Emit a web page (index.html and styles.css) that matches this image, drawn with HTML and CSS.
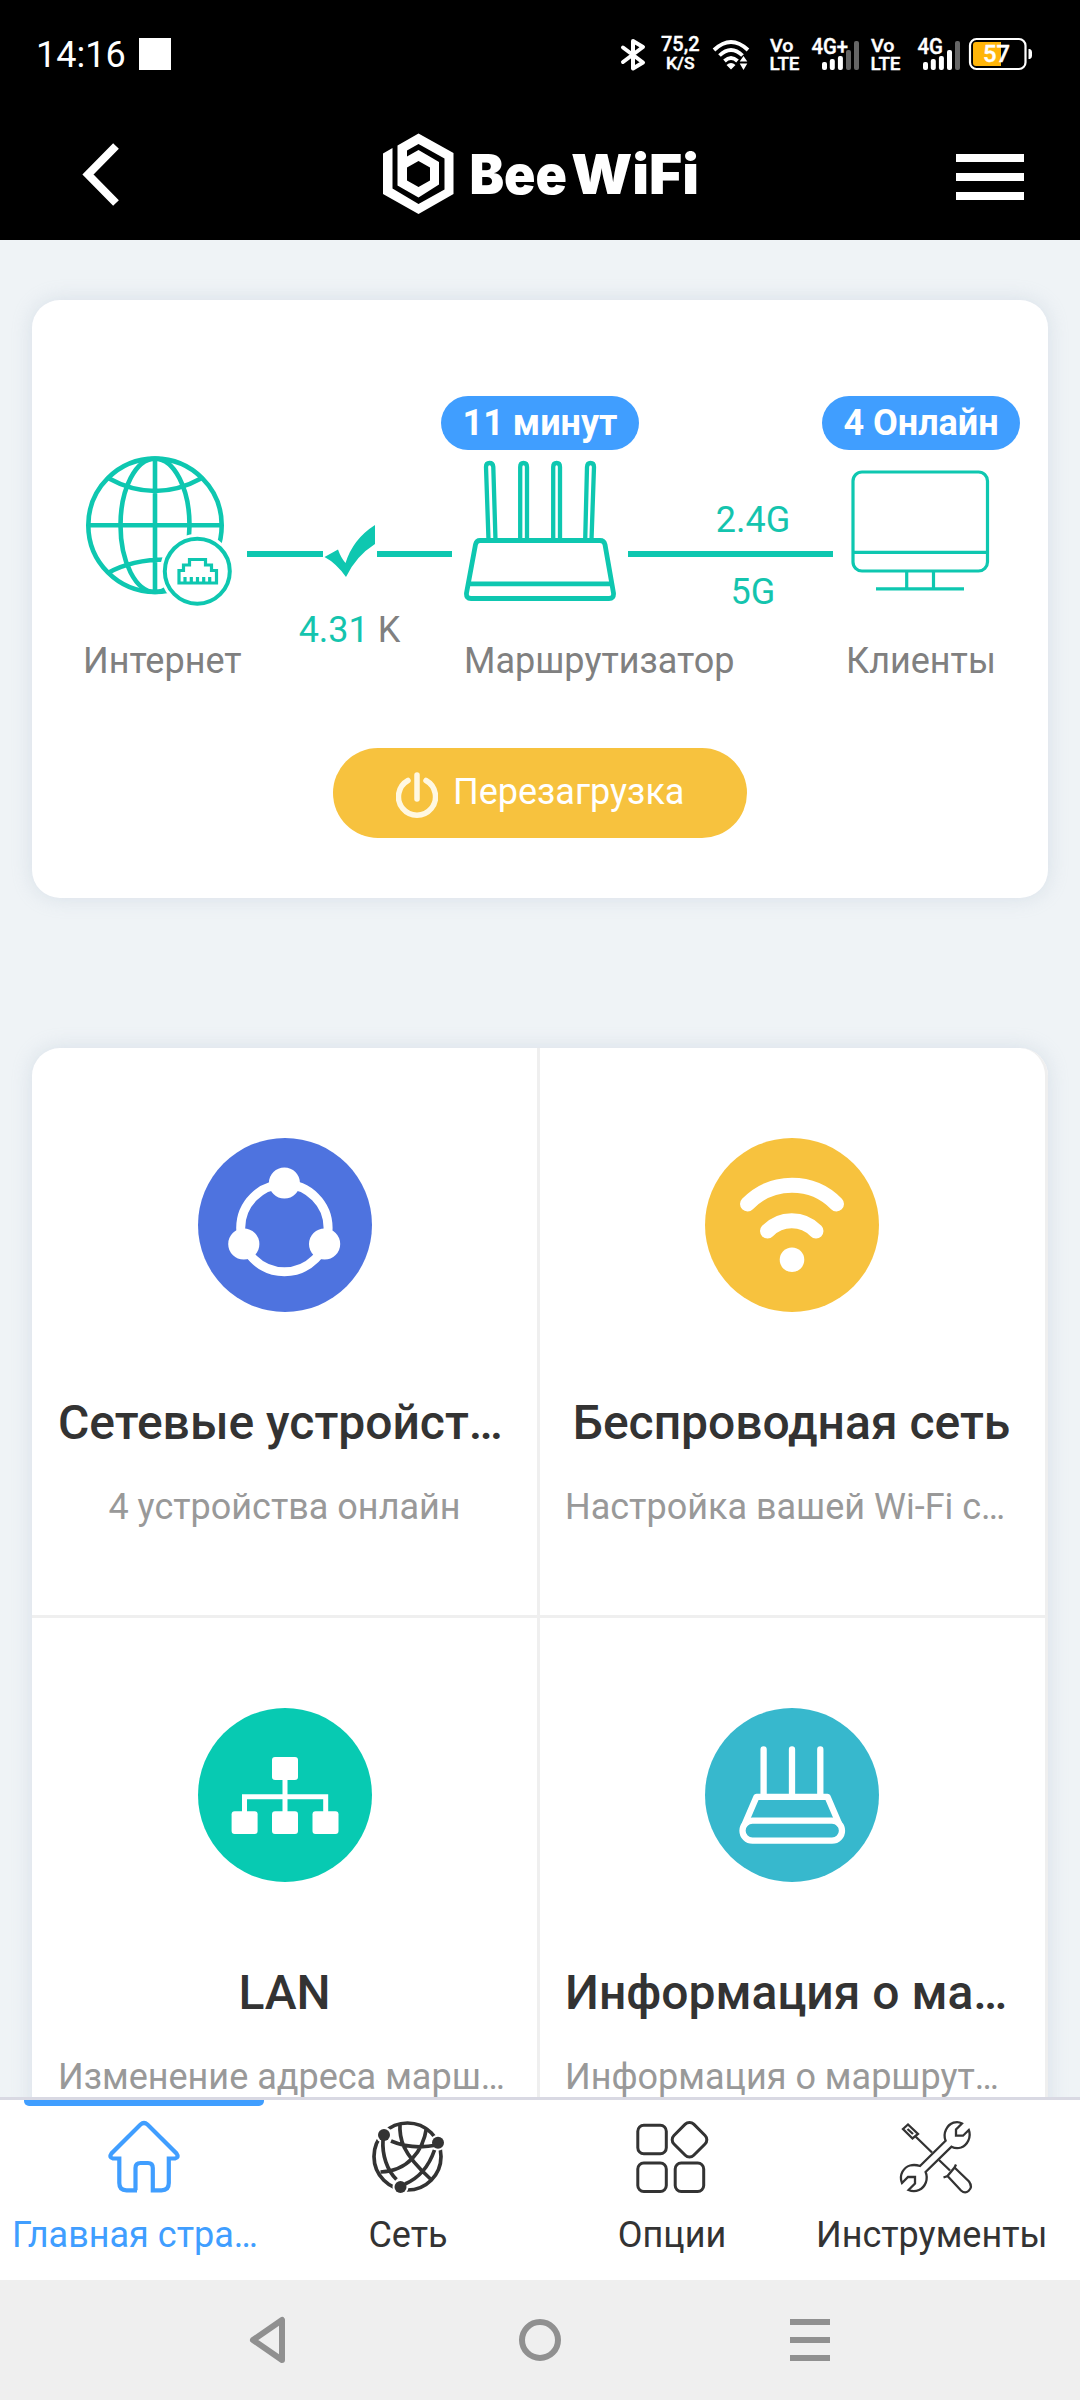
FILE: index.html
```html
<!DOCTYPE html>
<html lang="ru">
<head>
<meta charset="utf-8">
<title>BeeWiFi</title>
<link rel="stylesheet" href="styles.css">
</head>
<body>
<div class="screen">
  <div class="statusbar">
    <div class="clock"><span>14:16</span><i class="notice"></i></div>
    <div class="indicators">
      <svg width="40" height="48" viewBox="615 30 40 48"><path class="bt" d="M623 47.500L643 62.500L633 68.500V41L643 47L623 62"/></svg>
      <svg width="50" height="48" viewBox="655 30 50 48" class="tiny"><text x="661" y="51" font-size="21" textLength="38.500" lengthAdjust="spacingAndGlyphs">75,2</text><text x="666" y="69" font-size="16.500" textLength="28.500" lengthAdjust="spacingAndGlyphs">K/S</text></svg>
      <svg width="52" height="48" viewBox="705 30 52 48"><g class="arcs"><path d="M714 50Q731 34 748 50"/><path d="M719.500 55.500Q731 44.500 742.500 55.500"/><path d="M724.500 61Q731 55 737.500 61"/></g><path class="solid" d="M726.500 65Q731 61 735.500 65L731 69.500ZM743.500 56l3.800 5.500h-7.600zM743.500 70l3.800-6.500h-7.600z"/></svg>
      <svg width="108" height="48" viewBox="757 30 108 48" class="tiny"><text x="770" y="51.500" font-size="18.500" textLength="23.500" lengthAdjust="spacingAndGlyphs">Vo</text><text x="769.500" y="70" font-size="19" textLength="30" lengthAdjust="spacingAndGlyphs">LTE</text><text x="811.500" y="53.500" font-size="21.500" textLength="36.500" lengthAdjust="spacingAndGlyphs">4G+</text>
        <g><rect x="822" y="62" width="5" height="8" rx="2"/><rect x="829.800" y="59" width="5" height="11" rx="2"/><rect x="837.900" y="56" width="5" height="14" rx="2"/><rect class="off" x="846" y="50" width="5" height="20" rx="2"/><rect class="off" x="854" y="41" width="5" height="29" rx="2"/></g></svg>
      <svg width="97" height="48" viewBox="865 30 97 48" class="tiny"><text x="871" y="51.500" font-size="18.500" textLength="23.500" lengthAdjust="spacingAndGlyphs">Vo</text><text x="870.500" y="70" font-size="19" textLength="30" lengthAdjust="spacingAndGlyphs">LTE</text><text x="917.500" y="53.500" font-size="21.500" textLength="25.500" lengthAdjust="spacingAndGlyphs">4G</text>
        <g><rect x="923" y="62" width="5" height="8" rx="2"/><rect x="930.800" y="59" width="5" height="11" rx="2"/><rect x="938.900" y="56" width="5" height="14" rx="2"/><rect x="947" y="50" width="5" height="20" rx="2"/><rect class="off" x="955" y="41" width="5" height="29" rx="2"/></g></svg>
      <svg width="78" height="48" viewBox="962 30 78 48" class="tiny"><rect class="shell" x="970" y="39" width="55.500" height="30" rx="6.500"/><path class="charge" d="M976 42h25v24h-25q-3 0-3-3v-18q0-3 3-3z"/><path d="M1028.500 49h1.500q2 1 2 3v4q0 2-2 3h-1.500z"/><text x="983" y="62" font-size="23.500" textLength="27" lengthAdjust="spacingAndGlyphs">57</text></svg>
    </div>
  </div>

  <header class="appbar">
    <svg class="back" width="56" height="80" viewBox="72 134 56 80"><path d="M116 146L88 174.500L116 203"/></svg>
    <div class="brand">
      <svg width="71" height="82" viewBox="383 133 71 82"><path fill-rule="evenodd" d="M383 153.500L392.500 148V188.500L418.500 204L444.500 189.500V158.500L418.500 144L407 150.500V156.500L418.500 150L439 162V184.500L418.500 197.500L397.500 185.500V145.500L418.500 133.500L453.500 153V194L418.500 214L383 194ZM418.500 161L407 167.500V180.500L418.500 187L430 180.500V167.500Z"/></svg>
      <svg width="240" height="82" viewBox="464 133 240 82" class="wordmark"><text x="469.500" y="194" textLength="97.500" lengthAdjust="spacingAndGlyphs">Bee</text><text x="571" y="194" textLength="128" lengthAdjust="spacingAndGlyphs">WiFi</text></svg>
    </div>
    <div class="menu"><i></i><i></i><i></i></div>
  </header>

  <main class="content">
    <section class="card topology">
      <div class="chain">
        <div class="node internet">
          <svg class="line" width="165" height="185" viewBox="82 455 165 185">
            <g stroke-width="4.600"><circle cx="155" cy="525.300" r="66.700"/><ellipse cx="155" cy="525.300" rx="34.500" ry="66.700"/><path d="M155 459V592M88 525.300H222M108 478Q155 504 202 478M108 573Q132 559 170 559.500"/></g>
            <circle class="halo" cx="197.300" cy="571.200" r="37.500"/><circle cx="197.300" cy="571.200" r="32.500" stroke-width="4"/>
            <path stroke-width="3.200" d="M179 583V570.500H183.500V565H189.500V559.500H205.500V565H211.500V570.500H216.500V583ZM185 583V577M191.300 583V577M197.500 583V577M203.700 583V577M209.700 583V577"/>
          </svg>
          <span class="label">Интернет</span>
        </div>
        <div class="link uplink">
          <svg width="205" height="154" viewBox="247 455 205 154"><path d="M247 551H323V557H247ZM377 551H452V557H377ZM324.500 557L338 549.500Q341 558 345.500 563Q353 539 375 525V544Q356 556 346 577Q336 563 324.500 557Z"/></svg>
          <span class="rate"><b>4.31</b> K</span>
        </div>
        <div class="node router">
          <span class="badge">11 минут</span>
          <svg class="line" width="166" height="185" viewBox="462 455 166 185">
            <g stroke-width="4.300"><path d="M488.500 540L486 467Q486 463 489.500 463Q493 463 493.300 467L495.500 540M520.200 540V467Q520.200 463 523.500 463Q527 463 527 467V540M553.200 540V467Q553.200 463 556.700 463Q560 463 560 467V540M585.200 540L587 467Q587.200 463 590.500 463Q594 463 594 467L591.500 540"/></g>
            <path stroke-width="4.800" d="M480 540.500H600Q604 540.500 605 544.500L613.500 593Q614 598.500 609 598.500H471Q466 598.500 466.500 593L475.500 544.500Q476.500 540.500 480 540.500ZM468 583.800H612"/>
          </svg>
          <span class="label">Маршрутизатор</span>
        </div>
        <div class="link downlink">
          <span>2.4G</span><i></i><span>5G</span>
        </div>
        <div class="node clients">
          <span class="badge">4 Онлайн</span>
          <svg class="line" width="165" height="185" viewBox="844 455 165 185"><g stroke-width="3.200"><rect x="853" y="472" width="134.500" height="99" rx="9"/><path d="M853 552.300H987M906.700 571V588M933.500 571V588M876 588.800H964"/></g></svg>
          <span class="label">Клиенты</span>
        </div>
      </div>
      <div class="reboot">
        <svg width="42" height="46" viewBox="396 772 42 46"><path d="M408 780.500A18.500 18.500 0 1 0 426 780.500M417 775V799"/></svg>
        <span>Перезагрузка</span>
      </div>
    </section>

    <section class="card tiles">
      <div class="tile">
        <svg width="174" height="174" viewBox="0 0 174 174"><circle cx="87" cy="87" r="87" fill="#4e73df"/><circle cx="86.400" cy="90" r="43.700" fill="none" stroke="#fff" stroke-width="9"/><g fill="#fff"><circle cx="86.400" cy="45" r="15.500"/><circle cx="45.800" cy="106" r="15.600"/><circle cx="126.600" cy="106" r="15.600"/></g></svg>
        <h2 class="cut">Сетевые устройст…</h2>
        <p>4 устройства онлайн</p>
      </div>
      <div class="tile">
        <svg width="174" height="174" viewBox="0 0 174 174"><circle cx="87" cy="87" r="87" fill="#f7c23e"/><g fill="none" stroke="#fff" stroke-width="15" stroke-linecap="round"><path d="M42.500 66A62.300 62.300 0 0 1 131.500 66"/><path d="M62.500 93A33.800 33.800 0 0 1 111 93"/></g><circle cx="87" cy="121.700" r="12.300" fill="#fff"/></svg>
        <h2>Беспроводная сеть</h2>
        <p class="cut">Настройка вашей Wi-Fi с…</p>
      </div>
      <div class="tile">
        <svg width="174" height="174" viewBox="0 0 174 174"><circle cx="87" cy="87" r="87" fill="#07cab2"/><g fill="#fff"><rect x="74" y="49" width="26" height="23" rx="3"/><rect x="33.600" y="103.300" width="26" height="22.700" rx="3"/><rect x="74" y="103.300" width="26" height="22.700" rx="3"/><rect x="114.500" y="103.300" width="26" height="22.700" rx="3"/></g><path d="M87 70V105M46.500 105V88.800H127.700V105" fill="none" stroke="#fff" stroke-width="5"/></svg>
        <h2>LAN</h2>
        <p class="cut">Изменение адреса марш…</p>
      </div>
      <div class="tile">
        <svg width="174" height="174" viewBox="0 0 174 174"><circle cx="87" cy="87" r="87" fill="#37b8cd"/><g fill="none" stroke="#fff" stroke-width="6.300" stroke-linecap="round" stroke-linejoin="round"><path d="M58.600 41.500V88M87 41.500V88M115.300 41.500V88M40 115.500L51.500 88.800H122.500L134 115.500"/><rect x="37.500" y="112.700" width="99.500" height="20" rx="10"/></g></svg>
        <h2 class="cut">Информация о ма…</h2>
        <p class="cut">Информация о маршрут…</p>
      </div>
    </section>
  </main>

  <nav class="tabs">
    <div class="tab active">
      <svg width="72" height="72" viewBox="0 0 72 72"><path stroke-width="4.200" d="M29 69.300H18.500Q11.300 69.300 11.300 62V37.500H5Q0.500 36.500 3.500 32.500L32.500 3.500Q36 0.500 39.500 3.500L68.500 32.500Q71.500 36.500 67 37.500H60.800V62Q60.800 69.300 53.500 69.300H44.800V47Q44.800 42 40 42H32.500Q27.500 42 27.500 47V69.300"/></svg>
      <span class="from-start">Главная стра…</span>
    </div>
    <div class="tab">
      <svg width="72" height="72" viewBox="0 0 72 72"><circle cx="35.500" cy="35.500" r="33.500" stroke-width="3.700"/><g class="clear"><circle cx="12" cy="14" r="8.300"/><circle cx="66" cy="21.700" r="8"/><circle cx="28.500" cy="66" r="8"/></g><path stroke-width="3.700" d="M28 2C27 18 30 32 58.500 58M54.500 7C51 30 36 50 8.500 51M19 20Q40 29 65 24M11 19C10 34 15 49 24.500 58.500M62.500 29C57 45 47 57 33 63"/><g class="dots"><circle cx="12" cy="14" r="6"/><circle cx="66" cy="21.700" r="6"/><circle cx="28.500" cy="66" r="6"/></g></svg>
      <span>Сеть</span>
    </div>
    <div class="tab">
      <svg width="72" height="72" viewBox="0 0 72 72"><g stroke-width="3"><rect x="1.800" y="4.300" width="28.500" height="28.500" rx="6"/><rect x="1.800" y="42" width="28.500" height="28.500" rx="6"/><rect x="39.200" y="42" width="28.500" height="28.500" rx="6"/><rect x="39.500" y="4.700" width="28" height="28" rx="6" transform="rotate(45 53.500 18.700)"/></g></svg>
      <span>Опции</span>
    </div>
    <div class="tab">
      <svg width="72" height="72" viewBox="0 0 72 72"><g stroke-width="2.300"><path d="M62 2.500L56 8.500V14.700H63L68.800 9C71.500 16 67.500 24 61 26.500C57.500 27.700 54.500 27.200 51.500 25.700L25.600 51C28.500 58 25.500 66 19 69C15 70.800 11.500 70.300 8.500 69L15 62.500V56H8L2 62C-1.500 54 4 46 10 44.500C14 43.500 17 44 20 45L45.600 19.700C42.500 12 47 4 53.500 1.700C57 0.600 60 1.300 62 2.500Z"/><path d="M3 8L8 3.500L18 13L12.500 17.500ZM7.500 8L13 13M15.500 15.500L32 31.500M39 39L50 49.500M56 43.500L54.500 46.500L47.500 55L43.500 56.500M54.500 46.500L69 60.500Q73 66 68.500 70Q65 73 61 69.500L47.500 55"/></g></svg>
      <span class="from-start tools">Инструменты</span>
    </div>
  </nav>

  <footer class="sysnav">
    <svg width="120" height="60" viewBox="210 2310 120 60"><path d="M282 2320V2360L253 2340Z"/></svg>
    <svg width="120" height="60" viewBox="480 2310 120 60"><circle cx="540" cy="2340" r="18"/></svg>
    <svg width="120" height="60" viewBox="750 2310 120 60"><path d="M790 2322H830M790 2340H830M790 2358H830"/></svg>
  </footer>
</div>
</body>
</html>
```
FILE: styles.css
```css
* { box-sizing: border-box; }
body { margin: 0; font-family: Roboto, "Liberation Sans", sans-serif; font-size: 36px; line-height: 42px; color: #333; }
svg { display: block; flex: none; }
.screen { width: 1080px; height: 2400px; display: flex; flex-direction: column; overflow: hidden; background: #eff3f6; }

.statusbar { height: 108px; flex: none; background: #000; color: #fff; display: flex; justify-content: space-between; padding: 30px 40px 0 36px; }
.clock { display: flex; height: 48px; align-items: center; gap: 12px; }
.clock span { width: 91px; padding-top: 2px; }
.notice { width: 32px; height: 32px; background: #fff; }
.indicators { display: flex; }
.indicators svg { fill: #fff; }
.indicators .bt { fill: none; stroke: #fff; stroke-width: 4; stroke-linejoin: round; stroke-linecap: round; }
.arcs { fill: none; stroke: #fff; stroke-width: 3.8; }
.tiny text { font-weight: 500; stroke: #fff; stroke-width: .4; }
.off { fill: #666; }
.shell { fill: none; stroke: #fff; stroke-width: 2.2; }
.charge { fill: #ffb50a; }

.appbar { height: 132px; flex: none; background: #000; display: flex; align-items: center; justify-content: space-between; padding: 0 56px 0 72px; }
.back { fill: none; stroke: #fff; stroke-width: 8; }
.brand { display: flex; align-items: center; gap: 10px; margin-left: 255px; margin-right: auto; }
.brand svg { fill: #fff; overflow: visible; }
.wordmark text { font: 900 55px Inter, sans-serif; }
.menu { width: 68px; display: flex; flex-direction: column; gap: 11px; padding-top: 6px; }
.menu i { height: 8px; background: #fff; }

.content { flex: 1; min-height: 0; overflow: hidden; padding: 60px 32px 0; }
.card { background: #fff; border-radius: 28px; box-shadow: 0 0 20px rgba(160, 178, 200, .3); }

.topology { height: 598px; padding: 155px 0 0 50px; }
.chain { display: grid; grid-template-columns: 165px 205px 176px 205px 197px; }
.node { position: relative; }
.label { color: #808080; white-space: nowrap; margin-left: 1px; }
.router { padding-left: 10px; }
.clients { padding-left: 11px; }
.router .label, .clients .label { margin-left: 2px; }
.router .line, .clients .line { margin-left: 0; }
.line { fill: none; stroke: #0ec7b0; }
.halo { fill: #fff; stroke: none; }
.badge { position: absolute; top: -59px; height: 54px; width: 198px; line-height: 54px; border-radius: 27px; background: #409eff; color: #fff; font-weight: 700; text-align: center; white-space: nowrap; }
.router .badge { left: -11px; }
.clients .badge { left: -11px; }
.link { display: flex; flex-direction: column; color: #14c4ae; }
.link svg { fill: #0ec7b0; }
.rate { text-align: center; color: #808080; }
.rate b { font-weight: 400; color: #14c4ae; }
.downlink { padding-top: 44px; }
.downlink span { padding-left: 45px; text-align: center; }
.downlink i { height: 6px; margin: 10px 0 14px; background: #0ec7b0; }
.reboot { width: 414px; height: 90px; margin: 66px 0 0 251px; border-radius: 45px; background: #f7c23e; color: #fff; display: flex; padding: 24px 0 0 63px; }
.reboot svg { fill: none; stroke: #fff8e2; stroke-width: 5.5; stroke-linecap: round; }
.reboot span { margin: -1px 0 0 15px; }

.tiles { margin-top: 150px; display: grid; grid-template-columns: 508px 508px; }
.tile { height: 570px; padding: 90px 26px 0; border-right: 3px solid #efefef; border-bottom: 3px solid #efefef; }
.tile:nth-child(even) { padding: 90px 27px 0 25px; }
.tile:nth-child(2) { border-top-right-radius: 28px; }
.tile svg { margin: 0 auto; }
.tile h2 { margin: 83px 0 0; font-size: 48px; line-height: 56px; font-weight: 500; text-align: center; white-space: nowrap; }
.tile p { margin: 35px 0 0; color: #999; text-align: center; white-space: nowrap; }
.tile .cut { text-align: left; }

.tabs { height: 183px; flex: none; background: #fff; border-top: 3px solid #d9d9e3; display: grid; grid-template-columns: repeat(4, 264px); padding: 0 12px; }
.tab { display: flex; flex-direction: column; align-items: center; padding-top: 21px; position: relative; }
.tab svg { fill: none; stroke: #333; overflow: visible; }
.tab span { margin-top: 21px; white-space: nowrap; }
.tab .from-start { align-self: flex-start; }
.tab .tools { margin-left: 12px; }
.tab.active { color: #409eff; }
.tab.active svg { stroke: #409eff; }
.tab.active::before { content: ""; position: absolute; top: 0; left: 12px; width: 240px; height: 6px; background: #409eff; border-radius: 0 0 5px 5px; }
.tab .clear { fill: #fff; stroke: none; }
.tab .dots { fill: #333; stroke: none; }

.sysnav { height: 120px; flex: none; background: #efefef; display: flex; justify-content: center; align-items: center; gap: 150px; }
.sysnav svg { fill: none; stroke: #909090; stroke-width: 6; stroke-linejoin: round; }
```
